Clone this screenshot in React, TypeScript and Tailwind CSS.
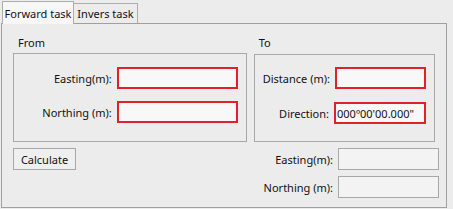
import * as React from "react"

function Field({ label, red, value, w }: { label: string; red?: boolean; value?: string; w: string }) {
  return (
    <div className="flex items-center justify-end gap-[5px]">
      <span className="whitespace-nowrap">{label}</span>
      <div
        className={`flex h-[22px] ${w} items-center whitespace-nowrap px-[1px] ${
          red ? "border-2 border-[#e0202a] bg-[#f8f8f8]" : "border border-[#a8a8a8] bg-[#f3f3f3]"
        }`}
      >
        {value}
      </div>
    </div>
  )
}

export default function App() {
  return (
    <div
      className="h-[209px] w-[453px] overflow-hidden bg-[#ececec] text-[11px] leading-none text-[#111]"
      style={{ fontFamily: '"Noto Sans", "Open Sans", sans-serif' }}
    >
      {/* Tabs */}
      <div className="flex h-[23px] items-end pl-[2px]">
        <div className="relative z-10 -mb-px flex h-[23px] w-[72px] items-center justify-center whitespace-nowrap border border-b-0 border-[#adadad] bg-[#f7f7f7]">
          Forward task
        </div>
        <div className="flex h-[20px] w-[64px] items-center justify-center whitespace-nowrap border-r border-t border-[#adadad] bg-[#ececec]">
          Invers task
        </div>
      </div>

      {/* Pane */}
      <div className="ml-[1px] h-[185px] w-[446px] border border-[#a0a0a0] px-[11px] pt-[13px]">
        <div className="flex gap-[7px]">
          <div className="w-[236px]">
            <div className="mb-[6px] h-[10px] pl-[5px]">From</div>
            <div className="flex h-[89px] flex-col gap-[12px] border border-[#a8a8a8] pr-[8px] pt-[13px]">
              <Field label="Easting(m):" red w="w-[121px]" />
              <Field label="Northing (m):" red w="w-[121px]" />
            </div>
          </div>
          <div className="w-[183px]">
            <div className="mb-[7px] h-[10px] pl-[5px]">To</div>
            <div className="flex h-[88px] flex-col gap-[13px] border border-[#a8a8a8] pr-[8px] pt-[12px]">
              <Field label="Distance (m):" red w="w-[91px]" />
              <Field label="Direction:" red value={"000º00'00.000\""} w="w-[92px]" />
            </div>
          </div>
        </div>

        <div className="mt-[6px] flex w-[426px] justify-between">
          <div className="flex h-[22px] w-[63px] items-center justify-center border border-[#a8a8a8] bg-[#efefef]">
            Calculate
          </div>
          <div className="flex flex-col gap-[6px]">
            <Field label="Easting(m):" w="w-[101px]" />
            <Field label="Northing (m):" w="w-[101px]" />
          </div>
        </div>
      </div>
    </div>
  )
}
